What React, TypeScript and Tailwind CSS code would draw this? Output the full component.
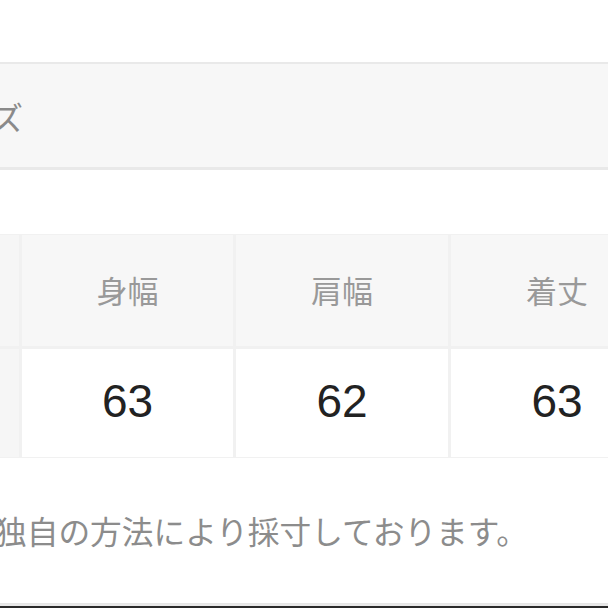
import React from "react";

export default function App() {
  const jp = { fontFamily: '"Noto Sans CJK JP", "Noto Sans", sans-serif' };
  const num = { fontFamily: '"Liberation Sans", Arial, sans-serif' };
  return (
    <div className="w-[608px] h-[608px] overflow-hidden bg-white flex flex-col" style={jp}>
      <div className="h-[62px] shrink-0" />
      <div className="h-[108px] shrink-0 bg-[#f7f7f7] border-t-2 border-b-[3px] border-[#e9e9e9] flex items-center overflow-hidden">
        <span className="ml-[-72px] text-[32px] leading-none text-[#8a8a8a] whitespace-nowrap">サイズ</span>
      </div>
      <div className="h-[64px] shrink-0" />
      <div className="shrink-0 overflow-hidden bg-[#f1f1f1] py-[1px]">
        <div className="grid grid-cols-[19px_211px_212px_212px] gap-[3px]">
          <div className="h-[111px] bg-[#f6f6f6]" />
          <div className="h-[111px] bg-[#f7f7f7] flex items-center justify-center text-[31px] text-[#999]">身幅</div>
          <div className="h-[111px] bg-[#f7f7f7] flex items-center justify-center text-[31px] text-[#999]">肩幅</div>
          <div className="h-[111px] bg-[#f7f7f7] flex items-center justify-center text-[31px] text-[#999]">着丈</div>
          <div className="h-[108px] bg-[#f6f6f6]" />
          <div className="h-[108px] bg-white flex items-center justify-center text-[46px] text-[#222] pb-[4px]" style={num}>63</div>
          <div className="h-[108px] bg-white flex items-center justify-center text-[46px] text-[#222] pb-[4px]" style={num}>62</div>
          <div className="h-[108px] bg-white flex items-center justify-center text-[46px] text-[#222] pb-[4px]" style={num}>63</div>
        </div>
      </div>
      <div className="h-[51px] shrink-0" />
      <div className="overflow-hidden whitespace-nowrap">
        <span className="block ml-[-5px] text-[31.7px] leading-[42px] text-[#8c8c8c]">独自の方法により採寸しております。</span>
      </div>
      <div className="flex-1" />
      <div className="h-[1px] bg-[#e5e5e5] shrink-0" />
      <div className="h-[2px] bg-[#e8e8e8] shrink-0" />
      <div className="h-[2px] bg-[#2a2a2a] shrink-0" />
    </div>
  );
}
